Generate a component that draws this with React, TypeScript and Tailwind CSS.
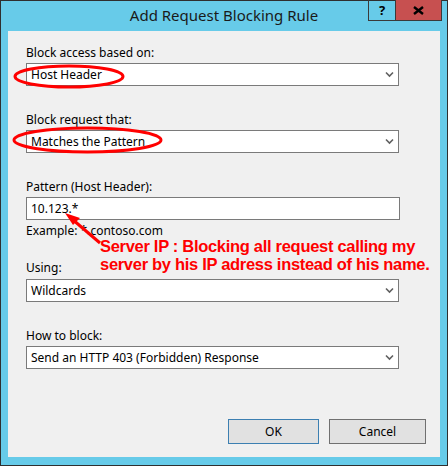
import React from "react";

const Chevron = () => (
  <svg width="9" height="7" viewBox="0 0 9 7" className="shrink-0">
    <polyline points="1,1.5 4.5,5 8,1.5" fill="none" stroke="#606060" strokeWidth="1.6" />
  </svg>
);

const Select = ({ value }: { value: string }) => (
  <div className="flex h-[23px] w-[373px] items-center justify-between border border-[#7a7a7a] bg-white pl-[4px] pr-[4px] text-[12px] leading-[16px] text-black">
    <span>{value}</span>
    <Chevron />
  </div>
);

const Label = ({ children, className = "" }: { children: React.ReactNode; className?: string }) => (
  <div className={"h-[16px] text-[12px] leading-[16px] text-black " + className}>{children}</div>
);

export default function App() {
  return (
    <div
      className="relative flex h-[466px] w-[448px] flex-col border border-[#2f2f2f] bg-[#67cbe9]"
      style={{ fontFamily: '"Noto Sans", "Open Sans", sans-serif' }}
    >
      {/* title bar */}
      <div className="flex h-[30px] items-start">
        <div className="w-[79px]" />
        <div className="flex-1 pt-[4px] text-center text-[15px] leading-[20px] text-[#1a1a1a]">
          Add Request Blocking Rule
        </div>
        <div className="mr-[5px] flex h-[21px] w-[74px] -mt-[1px]">
          <div className="flex w-[28px] items-center justify-center border-x border-b border-[#3a3a3a] text-[13px] font-bold leading-none text-black">
            ?
          </div>
          <div className="flex flex-1 items-center justify-center border-r border-b border-[#3a3a3a] bg-[#c75050]">
            <svg width="11" height="9" viewBox="0 0 11 9">
              <path d="M1 1 L10 8 M10 1 L1 8" stroke="#000" strokeWidth="2.4" />
            </svg>
          </div>
        </div>
      </div>

      {/* content panel */}
      <div className="mx-[7px] flex h-[426px] flex-col bg-[#f0f0f0] pl-[18px] pt-[14px]">
        <Label>Block access based on:</Label>
        <div className="mt-[2px]">
          <Select value="Host Header" />
        </div>

        <Label className="mt-[26px]">Block request that:</Label>
        <div className="mt-[2px]">
          <Select value="Matches the Pattern" />
        </div>

        <Label className="mt-[26px]">Pattern (Host Header):</Label>
        <div className="mt-[2px] flex h-[23px] w-[374px] items-center border border-[#7a7a7a] bg-white pl-[4px] text-[12px] leading-[16px] text-black">
          10.123.*
        </div>
        <Label className="mt-[3px]">Example: *.contoso.com</Label>

        <Label className="mt-[21px]">Using:</Label>
        <div className="mt-[3px]">
          <Select value="Wildcards" />
        </div>

        <Label className="mt-[26px]">How to block:</Label>
        <div className="mt-[2px]">
          <Select value="Send an HTTP 403 (Forbidden) Response" />
        </div>

        <div className="mt-[50px] flex justify-end gap-[10px] pr-[14px]">
          <button className="flex h-[25px] w-[91px] items-center justify-center border border-[#3c7fb1] bg-[#e1e1e1] text-[12px] leading-[16px] text-black">
            OK
          </button>
          <button className="flex h-[25px] w-[97px] items-center justify-center border border-[#707070] bg-[#e1e1e1] text-[12px] leading-[16px] text-black">
            Cancel
          </button>
        </div>
      </div>

      {/* red annotations */}
      <svg className="pointer-events-none absolute left-[-1px] top-[-1px]" width="448" height="466">
        <ellipse cx="69" cy="76.5" rx="54" ry="10.5" fill="none" stroke="#ff0000" strokeWidth="3" />
        <ellipse cx="87.5" cy="140" rx="73.5" ry="12" fill="none" stroke="#ff0000" strokeWidth="3" />
        <line x1="100" y1="243" x2="72" y2="219" stroke="#ff0000" strokeWidth="3" />
        <polygon points="65,213 80,218 73,225" fill="#ff0000" />
      </svg>
      <div
        className="pointer-events-none absolute left-[99px] top-[236px] whitespace-nowrap text-[16.5px] font-bold leading-[18px] tracking-[-0.3px] text-[#ff0000]"
        style={{ fontFamily: '"Liberation Sans", Arial, sans-serif' }}
      >
        <div>Server IP : Blocking all request calling my</div>
        <div>server by his IP adress instead of his name.</div>
      </div>
    </div>
  );
}
